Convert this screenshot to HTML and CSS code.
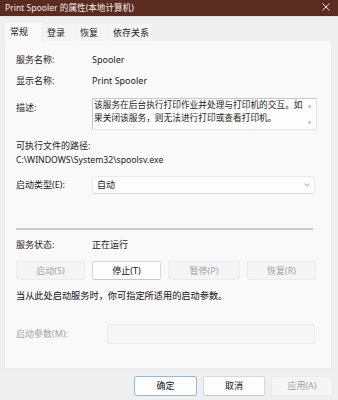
FILE: index.html
```html
<!DOCTYPE html>
<html lang="zh-CN">
<head>
    <meta charset="UTF-8">
    <meta name="viewport" content="width=device-width, initial-scale=1.0">
    <title>Print Spooler 的属性(本地计算机)</title>
    <link rel="stylesheet" href="styles.css">
</head>
<body>
    <div class="window">
        <div class="titlebar">
            <span class="title">Print Spooler 的属性(本地计算机)</span>
            <svg class="close" width="8" height="8" viewBox="0 0 8 8">
                <path d="M0.5 0.5 L7.5 7.5 M7.5 0.5 L0.5 7.5" stroke="#f2e9e6" stroke-width="1"/>
            </svg>
        </div>

        <div class="tabs">
            <div class="tab active">常规</div>
            <div class="tab">登录</div>
            <div class="tab">恢复</div>
            <div class="tab wide">依存关系</div>
        </div>

        <div class="panel">
            <div class="row first">
                <span class="label">服务名称:</span>
                <span>Spooler</span>
            </div>
            <div class="row gap-sm">
                <span class="label">显示名称:</span>
                <span>Print Spooler</span>
            </div>
            <div class="row desc-row">
                <span class="label">描述:</span>
                <div class="textbox">
                    <div class="textbox-text">
                        <div>该服务在后台执行打印作业并处理与打印机的交互。如</div>
                        <div>果关闭该服务，则无法进行打印或查看打印机。</div>
                    </div>
                    <div class="scroll">
                        <svg width="5" height="4" viewBox="0 0 5 4"><path d="M2.5 0.5 L4.5 3.5 L0.5 3.5 Z" fill="#b8b8b8"/></svg>
                        <svg width="5" height="4" viewBox="0 0 5 4"><path d="M0.5 0.5 L4.5 0.5 L2.5 3.5 Z" fill="#b8b8b8"/></svg>
                    </div>
                </div>
            </div>
            <div class="line path-label">可执行文件的路径:</div>
            <div class="line path">C:\WINDOWS\System32\spoolsv.exe</div>
            <div class="row select-row">
                <span class="label">启动类型(E):</span>
                <div class="select">
                    <span>自动</span>
                    <svg width="6" height="4" viewBox="0 0 6 4"><path d="M0.5 0.8 L3 3.2 L5.5 0.8" fill="none" stroke="#9a9a9a" stroke-width="0.9"/></svg>
                </div>
            </div>
            <div class="separator"></div>
            <div class="row status-row">
                <span class="label">服务状态:</span>
                <span>正在运行</span>
            </div>
            <div class="actions">
                <div class="btn disabled">启动(S)</div>
                <div class="btn">停止(T)</div>
                <div class="btn disabled">暂停(P)</div>
                <div class="btn disabled">恢复(R)</div>
            </div>
            <div class="line note">当从此处启动服务时，你可指定所适用的启动参数。</div>
            <div class="row param-row">
                <span class="label muted">启动参数(M):</span>
                <div class="param-input"></div>
            </div>
        </div>

        <div class="footer">
            <div class="btn dialog default">确定</div>
            <div class="btn dialog">取消</div>
            <div class="btn dialog disabled">应用(A)</div>
        </div>
    </div>
</body>
</html>
```

FILE: styles.css
```css
html, body {
    margin: 0;
    padding: 0;
}
body {
    font-family: "Noto Sans", "Noto Sans CJK SC", sans-serif;
    font-size: 9px;
    color: #1c1c1c;
    background-color: #efefef;
}
.window {
    width: 338px;
    height: 400px;
    background-color: #efefef;
    overflow: hidden;
}
.titlebar {
    height: 16px;
    background-color: #5b2b1f;
    border-bottom: 1px solid #e4e4e4;
    display: flex;
    align-items: center;
    justify-content: space-between;
    padding: 0 8px 0 5px;
    color: #f5efed;
    font-size: 8.6px;
}
.title {
    line-height: 14px;
}
.close {
    display: block;
    margin-top: -2px;
}
.tabs {
    display: flex;
    align-items: flex-end;
    gap: 1px;
    margin-top: 6px;
    padding-left: 5px;
    height: 18px;
}
.tab {
    height: 17px;
    line-height: 17px;
    padding: 0 10px 0 4px;
    background-color: #f4f4f4;
}
.tab.active {
    height: 18px;
    line-height: 18px;
    padding: 0 14px 0 5px;
    background-color: #f9f9f9;
}
.tab.wide {
    margin-left: 1px;
    padding: 0 3px;
}
.panel {
    box-sizing: border-box;
    width: 328px;
    height: 328px;
    margin-left: 4px;
    padding: 12px 16px 0 11px;
    background-color: #f9f9f9;
    border: 1px solid #ececec;
    border-top: none;
}
.row {
    display: grid;
    grid-template-columns: 76px 1fr;
    align-items: center;
    line-height: 14px;
}
.gap-sm {
    margin-top: 7px;
}
.desc-row {
    margin-top: 10px;
    align-items: start;
}
.desc-row .label {
    padding-top: 3px;
}
.textbox {
    box-sizing: border-box;
    height: 32px;
    display: flex;
    background-color: #fdfdfd;
    border: 1px solid;
    border-color: #c6c6c6 #e2e2e2 #e2e2e2 #c6c6c6;
}
.textbox-text {
    flex: 1;
    padding: 0 1px;
    font-size: 8.7px;
    line-height: 13px;
    white-space: nowrap;
}
.scroll {
    width: 12px;
    display: flex;
    flex-direction: column;
    align-items: center;
    justify-content: space-between;
    padding: 5px 0 4px;
}
.scroll svg {
    display: block;
}
.line {
    line-height: 14px;
}
.path {
    font-size: 8.7px;
}
.path-label {
    margin-top: 9px;
}
.select-row {
    margin-top: 9px;
}
.select {
    box-sizing: border-box;
    height: 18px;
    display: flex;
    align-items: center;
    justify-content: space-between;
    padding: 0 4px 0 4px;
    background-color: #fdfdfd;
    border: 1px solid #ebebeb;
    border-bottom-color: #d6d6d6;
    border-radius: 2px;
}
.select svg {
    display: block;
}
.separator {
    height: 2px;
    margin: 34px 2px 0 0;
    background-color: #cbcbcb;
}
.status-row {
    margin-top: 8px;
}
.actions {
    display: grid;
    grid-template-columns: 69px 69px 72px 69px;
    gap: 7px;
    margin-top: 9px;
}
.btn {
    box-sizing: border-box;
    height: 19px;
    line-height: 17px;
    text-align: center;
    background-color: #fdfdfd;
    border: 1px solid #d9d9d9;
    border-bottom-color: #c8c8c8;
    border-radius: 2px;
    color: #111;
}
.btn.disabled {
    background-color: #f5f5f5;
    border-color: #ebebeb;
    color: #a2a2a2;
}
.note {
    margin-top: 9px;
    font-size: 9.2px;
    color: #111;
}
.param-row {
    margin-top: 21px;
    grid-template-columns: 91px 1fr;
}
.muted {
    color: #a4a4a4;
}
.param-input {
    height: 20px;
    box-sizing: border-box;
    background-color: #f6f6f6;
    border: 1px solid #ededed;
    border-radius: 2px;
}
.footer {
    display: flex;
    justify-content: flex-end;
    gap: 6px;
    margin-top: 7px;
    padding-right: 5px;
}
.btn.dialog {
    width: 62px;
    height: 20px;
    line-height: 18px;
}
.btn.default {
    width: 63px;
    border-color: #8fbbe3;
}
```
